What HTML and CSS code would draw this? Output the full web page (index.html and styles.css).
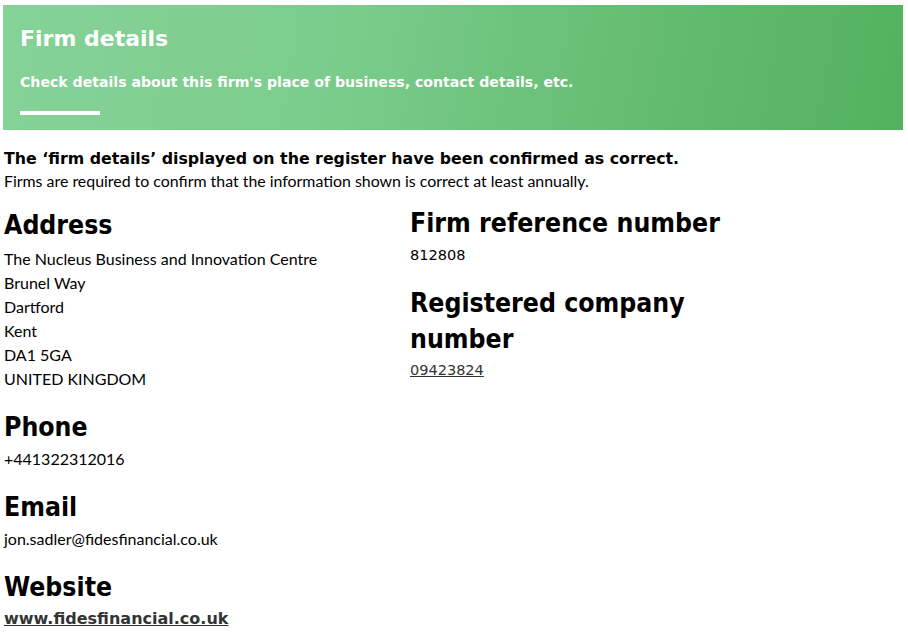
FILE: index.html
```
<!DOCTYPE html>
<html>
<head>
<meta charset="utf-8">
<link rel="stylesheet" href="styles.css">
</head>
<body>
<div class="page">
  <header class="banner">
    <h1 class="banner-title">Firm details</h1>
    <p class="banner-sub">Check details about this firm's place of business, contact details, etc.</p>
    <div class="banner-rule"></div>
  </header>
  <p class="confirm">The ‘firm details’ displayed on the register have been confirmed as correct.</p>
  <p class="note">Firms are required to confirm that the information shown is correct at least annually.</p>
  <div class="cols">
    <div class="col col-left">
      <h2 class="h">Address</h2>
      <div class="addr">
        <div>The Nucleus Business and Innovation Centre</div>
        <div>Brunel Way</div>
        <div>Dartford</div>
        <div>Kent</div>
        <div>DA1 5GA</div>
        <div>UNITED KINGDOM</div>
      </div>
      <h2 class="h h-gap">Phone</h2>
      <div class="val">+441322312016</div>
      <h2 class="h h-gap">Email</h2>
      <div class="val">jon.sadler@fidesfinancial.co.uk</div>
      <h2 class="h h-gap">Website</h2>
      <a class="site" href="#">www.fidesfinancial.co.uk</a>
    </div>
    <div class="col col-right">
      <h2 class="h">Firm reference number</h2>
      <div class="num">812808</div>
      <h2 class="h h-gap">Registered company number</h2>
      <a class="num link" href="#">09423824</a>
    </div>
  </div>
</div>
</body>
</html>
```
FILE: styles.css
```
html, body { margin: 0; padding: 0; background: #fff; }
body { font-family: "Lato", "DejaVu Sans", sans-serif; color: #000; }
.page { padding: 5px 5px 0 3px; }
.banner {
  background: linear-gradient(100deg, #86d297 0%, #7ccd8d 35%, #64bd72 70%, #53b15d 100%);
  height: 125px;
  box-sizing: border-box;
  padding: 22px 17px 0 17px;
  color: #fff;
}
.banner-title {
  margin: 0;
  font-family: "DejaVu Sans", sans-serif;
  font-weight: bold;
  font-size: 22px;
  line-height: 24px;
}
.banner-sub {
  margin: 22px 0 0 0;
  font-family: "DejaVu Sans", sans-serif;
  font-weight: bold;
  font-size: 14.1px;
  line-height: 18px;
}
.banner-rule {
  margin-top: 20px;
  width: 80px;
  height: 4px;
  background: #fff;
}
.confirm {
  margin: 19px 0 0 1px;
  font-family: "DejaVu Sans", sans-serif;
  font-weight: bold;
  font-size: 15.8px;
  line-height: 20px;
}
.note {
  margin: 3px 0 0 1px;
  font-size: 15.9px;
  line-height: 18px;
}
.cols { display: flex; margin: 15px 0 0 1px; }
.col-left { width: 406px; padding-top: 2px; }
.col-right { width: 340px; }
.h {
  margin: 0;
  font-family: "DejaVu Sans Condensed", "DejaVu Sans", sans-serif;
  font-stretch: condensed;
  font-weight: bold;
  font-size: 26.4px;
  line-height: 36px;
}
.h-gap { margin-top: 18px; }
.addr { margin-top: 4px; margin-bottom: 1px; font-size: 16px; line-height: 24px; }
.val { margin-top: 2px; font-size: 16px; line-height: 24px; }
.num {
  display: inline-block;
  margin-top: 2px;
  font-family: "DejaVu Sans", sans-serif;
  font-size: 14.5px;
  line-height: 24px;
  color: #000;
}
.col-right .link { margin-top: 1px; }
.link { color: #333; text-decoration: underline; }
.site {
  display: inline-block;
  margin-top: 2px;
  font-family: "DejaVu Sans", sans-serif;
  font-weight: bold;
  font-size: 16px;
  line-height: 24px;
  color: #333;
}
```
